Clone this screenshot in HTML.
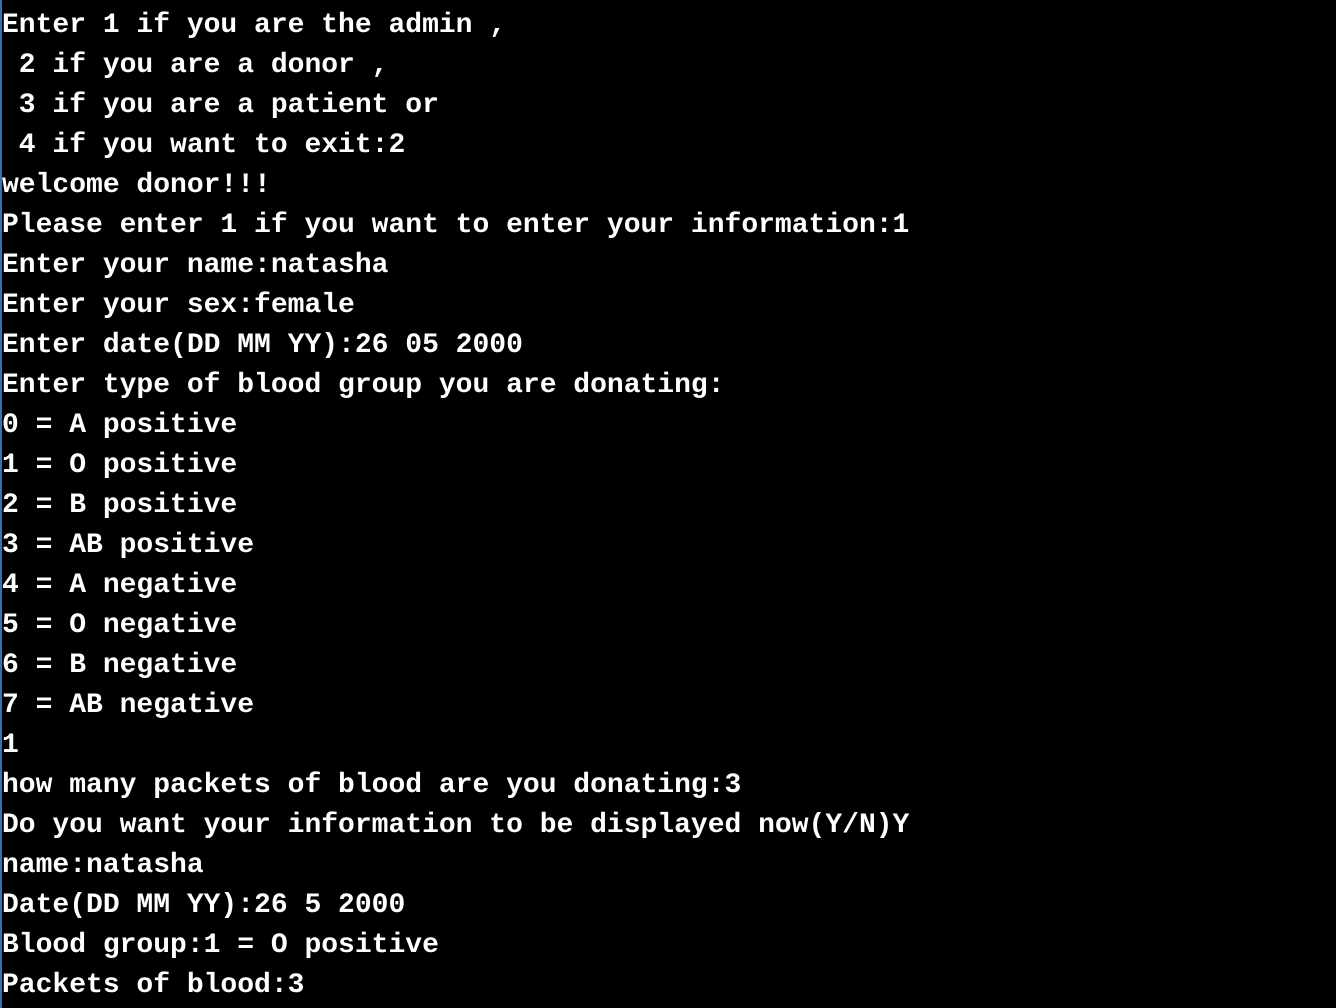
<!DOCTYPE html>
<html><head><meta charset="utf-8"><style>
html,body{margin:0;padding:0;background:#000;width:1336px;height:1008px;overflow:hidden}
body{position:relative}
.bar{position:absolute;left:0;top:0;width:2px;height:1008px;background:#3a6fb0}
pre{position:absolute;left:2px;top:6px;margin:0;font-family:"Liberation Mono","Courier New",monospace;font-weight:bold;font-size:28px;line-height:40px;color:#fff;white-space:pre}
</style></head><body><div class="bar"></div><pre>Enter 1 if you are the admin ,
 2 if you are a donor ,
 3 if you are a patient or
 4 if you want to exit:2
welcome donor!!!
Please enter 1 if you want to enter your information:1
Enter your name:natasha
Enter your sex:female
Enter date(DD MM YY):26 05 2000
Enter type of blood group you are donating:
0 = A positive
1 = O positive
2 = B positive
3 = AB positive
4 = A negative
5 = O negative
6 = B negative
7 = AB negative
1
how many packets of blood are you donating:3
Do you want your information to be displayed now(Y/N)Y
name:natasha
Date(DD MM YY):26 5 2000
Blood group:1 = O positive
Packets of blood:3</pre></body></html>
